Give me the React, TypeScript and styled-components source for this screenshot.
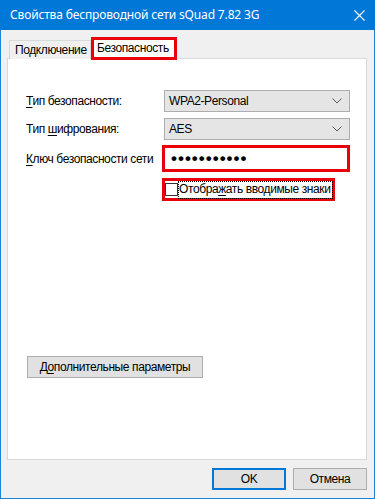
import React from "react";
import styled, { createGlobalStyle } from "styled-components";

const GlobalStyle = createGlobalStyle`
  html, body {
    margin: 0;
    padding: 0;
    background: #f0f0f0;
  }
  * {
    box-sizing: border-box;
  }
`;

const Window = styled.div`
  width: 375px;
  height: 499px;
  display: flex;
  flex-direction: column;
  background: #f0f0f0;
  border: 1px solid #1883d7;
  border-top: none;
  font-family: "Liberation Sans", Arial, sans-serif;
  font-size: 12px;
  letter-spacing: -0.4px;
  color: #000;
`;

const TitleBar = styled.div`
  height: 30px;
  margin: 0 -1px;
  padding: 0 0 0 10px;
  display: flex;
  align-items: center;
  justify-content: space-between;
  background: #0078d7;
  color: #fff;
  flex-shrink: 0;
`;

const TitleText = styled.span`
  font-family: "Noto Sans", sans-serif;
  font-size: 12px;
  letter-spacing: -0.15px;
  line-height: 1;
  padding-bottom: 1px;
`;

const CloseButton = styled.div`
  width: 32px;
  height: 30px;
  display: flex;
  align-items: center;
  justify-content: center;
`;

const Body = styled.div`
  flex: 1;
  display: flex;
  flex-direction: column;
  padding: 7px 7px 0 6px;
`;

const TabStrip = styled.div`
  display: flex;
  align-items: flex-end;
  padding-left: 2px;
  height: 22px;
  position: relative;
  z-index: 1;
  margin-bottom: -1px;
`;

const Tab = styled.div<{ $active?: boolean }>`
  display: flex;
  align-items: center;
  height: ${({ $active }) => ($active ? "23px" : "19px")};
  padding: ${({ $active }) => ($active ? "0 0 1px 3px" : "0 0 0 5px")};
  background: ${({ $active }) => ($active ? "#fff" : "#f0f0f0")};
  border: ${({ $active }) => ($active ? "3px solid #e8000b" : "1px solid #d9d9d9")};
  border-bottom: ${({ $active }) => ($active ? "3px solid #e8000b" : "none")};
  margin-bottom: ${({ $active }) => ($active ? "-1px" : "0")};
  width: ${({ $active }) => ($active ? "86px" : "82px")};
  white-space: nowrap;
`;

const Panel = styled.div`
  flex: 1;
  background: #fff;
  border: 1px solid #d9d9d9;
  padding: 31px 17px 0 18px;
  display: flex;
  flex-direction: column;
`;

const FormGrid = styled.div`
  display: grid;
  grid-template-columns: 138px 186px;
  row-gap: 6px;
  align-items: center;
`;

const Label = styled.span`
  white-space: nowrap;
`;

const U = styled.span`
  text-decoration: underline;
  text-underline-offset: 2px;
`;

const Select = styled.div`
  height: 22px;
  border: 1px solid #adadad;
  background: #e5e5e5;
  display: flex;
  align-items: center;
  justify-content: space-between;
  padding: 0 7px 0 4px;
`;

const KeyField = styled.div`
  height: 27px;
  margin-left: -2px;
  margin-top: -1px;
  border: 3px solid #e8000b;
  background: #fff;
  display: flex;
  align-items: center;
  padding: 0 0 1px 6px;
`;

const Dots = styled.span`
  font-family: "Liberation Sans", sans-serif;
  font-size: 17px;
  font-weight: bold;
  letter-spacing: 1px;
  line-height: 1;
`;

const CheckRow = styled.div`
  grid-column: 2;
  margin-left: -2px;
  width: 173px;
  height: 23px;
  border: 3px solid #e8000b;
  display: flex;
  align-items: center;
  padding-left: 0;
`;

const Checkbox = styled.span`
  width: 13px;
  height: 13px;
  border: 1px solid #333;
  background: #fff;
  flex-shrink: 0;
`;

const FocusText = styled.span`
  margin-left: 1px;
  padding: 0 1px 1px 0;
  outline: 1px dotted #000;
  outline-offset: 0;
  white-space: nowrap;
  line-height: 15px;
`;

const PushButton = styled.div<{ $default?: boolean }>`
  height: 22px;
  display: flex;
  align-items: center;
  justify-content: center;
  background: #e1e1e1;
  border: ${({ $default }) => ($default ? "2px solid #0078d7" : "1px solid #adadad")};
  white-space: nowrap;
`;

const AdvancedButton = styled(PushButton)`
  width: 176px;
  margin-top: 155px;
  margin-left: 1px;
  padding-bottom: 1px;
`;

const Footer = styled.div`
  display: flex;
  justify-content: flex-end;
  gap: 7px;
  padding: 8px 0 8px;
`;

const DialogButton = styled(PushButton)`
  width: 74px;
`;

const Chevron = () => (
  <svg width="10" height="6" viewBox="0 0 10 6">
    <path d="M0.5 0.5 L5 5 L9.5 0.5" fill="none" stroke="#5a5a5a" strokeWidth="1" />
  </svg>
);

export default function App() {
  return (
    <>
      <GlobalStyle />
      <Window>
        <TitleBar>
          <TitleText>Свойства беспроводной сети sQuad 7.82 3G</TitleText>
          <CloseButton>
            <svg width="11" height="11" viewBox="0 0 11 11">
              <path d="M0.5 0.5 L10.5 10.5 M10.5 0.5 L0.5 10.5" stroke="#fff" strokeWidth="1.1" />
            </svg>
          </CloseButton>
        </TitleBar>
        <Body>
          <TabStrip>
            <Tab>Подключение</Tab>
            <Tab $active>Безопасность</Tab>
          </TabStrip>
          <Panel>
            <FormGrid>
              <Label>
                <U>Т</U>ип безопасности:
              </Label>
              <Select>
                <span>WPA2-Personal</span>
                <Chevron />
              </Select>
              <Label>
                Тип <U>ш</U>ифрования:
              </Label>
              <Select>
                <span>AES</span>
                <Chevron />
              </Select>
              <Label>
                <U>К</U>люч безопасности сети
              </Label>
              <KeyField>
                <Dots>•••••••••••</Dots>
              </KeyField>
              <CheckRow>
                <Checkbox />
                <FocusText>
                  Отобра<U>ж</U>ать вводимые знаки
                </FocusText>
              </CheckRow>
            </FormGrid>
            <AdvancedButton>
              <span>
                Д<U>о</U>полнительные параметры
              </span>
            </AdvancedButton>
          </Panel>
          <Footer>
            <DialogButton $default>OK</DialogButton>
            <DialogButton>Отмена</DialogButton>
          </Footer>
        </Body>
      </Window>
    </>
  );
}
